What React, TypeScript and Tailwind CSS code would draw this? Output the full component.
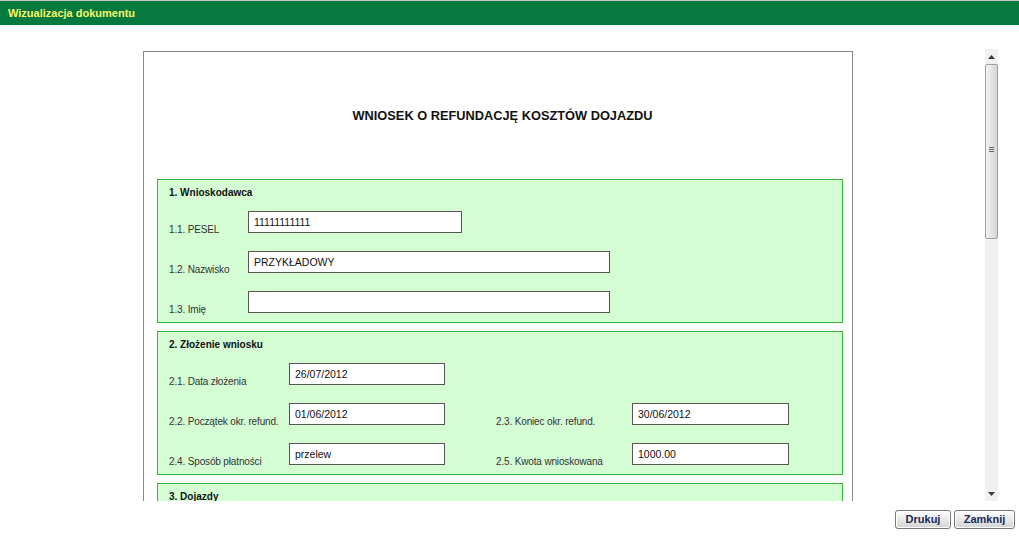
import type { ReactNode } from "react";

type FieldProps = {
  label: string;
  value?: string;
  labelWidth: string;
  inputWidth: string;
};

const Field = ({ label, value = "", labelWidth, inputWidth }: FieldProps) => {
  return (
    <div className="flex items-end h-[22px]">
      <div className={`${labelWidth} text-[10px] tracking-[-0.15px] leading-[13px] mb-[-3px] text-[#333333]`}>
        {label}
      </div>
      <div
        className={`${inputWidth} h-[22px] border border-[#555555] bg-white px-[5px] pt-[1px] text-[10.5px] leading-[18px] text-[#111111]`}
      >
        {value}
      </div>
    </div>
  );
};

const Section = ({ title, children, className = "" }: { title: string; children?: ReactNode; className?: string }) => {
  return (
    <div className={`border border-[#3db53d] bg-[#d4fdd4] pt-[6px] pl-[11px] ${className}`}>
      <div className="h-[14px] text-[10px] leading-[14px] font-bold text-[#111111]">{title}</div>
      {children}
    </div>
  );
};

const Triangle = ({ down = false }: { down?: boolean }) => (
  <svg width="7" height="4" viewBox="0 0 7 4">
    {down ? <polygon points="0,0 7,0 3.5,4" fill="#3a3a3a" /> : <polygon points="0,4 7,4 3.5,0" fill="#3a3a3a" />}
  </svg>
);

const Scrollbar = () => (
  <div className="w-[13px] h-[452px] mt-[1px] mr-[21px] bg-[#f0f0f0] flex flex-col">
    <div className="h-[15px] flex items-center justify-center">
      <Triangle />
    </div>
    <div className="h-[175px] rounded-[2px] border border-[#a0a0a0] bg-linear-to-r from-[#f2f2f2] to-[#d6d6d6] flex items-center justify-center">
      <div className="flex flex-col gap-[1px] mt-[-5px]">
        <div className="w-[5px] h-[1px] bg-[#666666]" />
        <div className="w-[5px] h-[1px] bg-[#666666]" />
        <div className="w-[5px] h-[1px] bg-[#666666]" />
      </div>
    </div>
    <div className="flex-1" />
    <div className="h-[15px] flex items-center justify-center">
      <Triangle down />
    </div>
  </div>
);

const Button = ({ children, width }: { children: ReactNode; width: string }) => (
  <button
    className={`${width} h-[19px] rounded-[3px] border border-[#767676] bg-linear-to-b from-white to-[#d2d2d2] shadow-[inset_0_0_0_1px_#ffffff] text-[11px] leading-[15px] font-bold text-[#1a2c58]`}
  >
    {children}
  </button>
);

export default function App() {
  return (
    <div className="w-[1019px] h-[539px] bg-white flex flex-col font-['Liberation_Sans',Arial,sans-serif] overflow-hidden">
      <div className="h-[25px] border-t border-[#c8c8c8] bg-[#06793f] flex items-center pl-[8px]">
        <span className="text-[11px] font-bold text-[#f6f66a]">Wizualizacja dokumentu</span>
      </div>

      <div className="flex mt-[23px] h-[453px]">
        <div className="flex-1 overflow-hidden">
          <div className="ml-[143px] mt-[3px] w-[710px] border border-[#8a8a8a] bg-white pl-[13px] pr-[9px] pb-[20px]">
            <div className="h-[127px] flex items-center justify-center text-[12.8px] font-bold text-[#111111] pl-[5px]">
              WNIOSEK O REFUNDACJĘ KOSZTÓW DOJAZDU
            </div>

            <div className="flex flex-col gap-[8px]">
              <Section title="1. Wnioskodawca" className="pb-[9px]">
                <div className="flex flex-col gap-[18px] mt-[11px]">
                  <Field label="1.1. PESEL" value="11111111111" labelWidth="w-[79px]" inputWidth="w-[214px]" />
                  <Field label="1.2. Nazwisko" value="PRZYKŁADOWY" labelWidth="w-[79px]" inputWidth="w-[362px]" />
                  <Field label="1.3. Imię" labelWidth="w-[79px]" inputWidth="w-[362px]" />
                </div>
              </Section>

              <Section title="2. Złożenie wniosku" className="pb-[9px]">
                <div className="flex flex-col gap-[18px] mt-[11px]">
                  <div className="flex gap-[51px]">
                    <Field label="2.1. Data złożenia" value="26/07/2012" labelWidth="w-[120px]" inputWidth="w-[156px]" />
                  </div>
                  <div className="flex gap-[51px]">
                    <Field label="2.2. Początek okr. refund." value="01/06/2012" labelWidth="w-[120px]" inputWidth="w-[156px]" />
                    <Field label="2.3. Koniec okr. refund." value="30/06/2012" labelWidth="w-[136px]" inputWidth="w-[157px]" />
                  </div>
                  <div className="flex gap-[51px]">
                    <Field label="2.4. Sposób płatności" value="przelew" labelWidth="w-[120px]" inputWidth="w-[156px]" />
                    <Field label="2.5. Kwota wnioskowana" value="1000.00" labelWidth="w-[136px]" inputWidth="w-[157px]" />
                  </div>
                </div>
              </Section>

              <Section title="3. Dojazdy" className="h-[60px]" />
            </div>
          </div>
        </div>
        <Scrollbar />
      </div>

      <div className="flex justify-end gap-[3px] pr-[4px] mt-[9px]">
        <Button width="w-[56px]">Drukuj</Button>
        <Button width="w-[61px]">Zamknij</Button>
      </div>
    </div>
  );
}
